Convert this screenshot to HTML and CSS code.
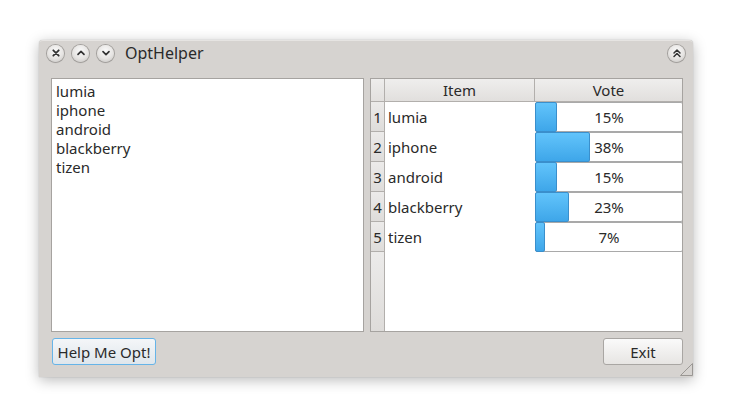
FILE: index.html
```html
<!DOCTYPE html>
<html>
<head>
<meta charset="utf-8">
<link rel="stylesheet" href="styles.css">
</head>
<body>
<div class="window">
  <div class="titlebar">
    <div class="tbtn"><svg width="16" height="16" viewBox="0 0 16 16"><path d="M5.3 5.3 L10.7 10.7 M10.7 5.3 L5.3 10.7" stroke="#333" stroke-width="1.8" stroke-linecap="round"/></svg></div>
    <div class="tbtn"><svg width="16" height="16" viewBox="0 0 16 16"><path d="M5 9.3 L8 6.3 L11 9.3" fill="none" stroke="#333" stroke-width="1.7" stroke-linecap="round" stroke-linejoin="round"/></svg></div>
    <div class="tbtn"><svg width="16" height="16" viewBox="0 0 16 16"><path d="M5 6.7 L8 9.7 L11 6.7" fill="none" stroke="#333" stroke-width="1.7" stroke-linecap="round" stroke-linejoin="round"/></svg></div>
    <div class="title">OptHelper</div>
    <div class="tbtn right"><svg width="16" height="16" viewBox="0 0 16 16"><path d="M5 8 L8 5 L11 8 M5 11.5 L8 8.5 L11 11.5" fill="none" stroke="#333" stroke-width="1.5" stroke-linecap="round" stroke-linejoin="round"/></svg></div>
  </div>
  <div class="content">
    <div class="panels">
      <div class="list">
        <div>lumia</div>
        <div>iphone</div>
        <div>android</div>
        <div>blackberry</div>
        <div>tizen</div>
      </div>
      <div class="table">
        <div class="row head">
          <div class="corner"></div>
          <div class="hcell item">Item</div>
          <div class="hcell vote">Vote</div>
        </div>
        <div class="body">
          <div class="row">
            <div class="rh">1</div><div class="cell item">lumia</div>
            <div class="cell vote"><div class="bar"><div class="chunk" style="width:15%"></div><span>15%</span></div></div>
          </div>
          <div class="row">
            <div class="rh">2</div><div class="cell item">iphone</div>
            <div class="cell vote"><div class="bar"><div class="chunk" style="width:38%"></div><span>38%</span></div></div>
          </div>
          <div class="row">
            <div class="rh">3</div><div class="cell item">android</div>
            <div class="cell vote"><div class="bar"><div class="chunk" style="width:15%"></div><span>15%</span></div></div>
          </div>
          <div class="row">
            <div class="rh">4</div><div class="cell item">blackberry</div>
            <div class="cell vote"><div class="bar"><div class="chunk" style="width:23%"></div><span>23%</span></div></div>
          </div>
          <div class="row">
            <div class="rh">5</div><div class="cell item">tizen</div>
            <div class="cell vote"><div class="bar"><div class="chunk" style="width:7%"></div><span>7%</span></div></div>
          </div>
          <div class="row filler">
            <div class="rh empty"></div><div class="cell item"></div><div class="cell vote"></div>
          </div>
        </div>
      </div>
    </div>
    <div class="buttons">
      <button class="btn help">Help Me Opt!</button>
      <button class="btn exit">Exit</button>
    </div>
  </div>
  <svg class="grip" width="13" height="13" viewBox="0 0 13 13"><path d="M12.5 0.5 L0.5 12.5 L12.5 12.5 Z" fill="none" stroke="#9a9794" stroke-width="1"/></svg>
</div>
</body>
</html>
```
FILE: styles.css
```css
html, body {
  margin: 0;
  padding: 0;
  background: #ffffff;
}
body {
  width: 734px;
  height: 416px;
  padding: 40px 0 0 39px;
  box-sizing: border-box;
  font-family: "Noto Sans", "DejaVu Sans", sans-serif;
  font-size: 15px;
  color: #2a2a2a;
}
.window {
  position: relative;
  width: 654px;
  height: 337px;
  background: #d6d3d0;
  border-radius: 4px 4px 0 0;
  box-shadow: 0 3px 14px rgba(0,0,0,0.28), 0 0 1px rgba(0,0,0,0.35);
  display: flex;
  flex-direction: column;
}
.titlebar {
  height: 24px;
  display: flex;
  align-items: center;
  padding: 0 8px 0 8px;
  gap: 8px;
  border-top: 1px solid #e6e4e2;
  border-radius: 4px 4px 0 0;
}
.tbtn {
  width: 17px;
  height: 17px;
  border-radius: 50%;
  background: radial-gradient(circle at 50% 35%, #fafafa 0%, #e6e4e2 55%, #c2c0be 100%);
  box-shadow: 0 0 0 1px #a3a09d, 0 1px 1px rgba(0,0,0,0.18);
  display: flex;
  align-items: center;
  justify-content: center;
}
.tbtn svg { display: block; }
.tbtn.right { margin-left: auto; }
.title {
  margin-left: 3px;
  font-size: 16px;
  color: #2a2a2a;
  padding-bottom: 1px;
}
.content {
  flex: 1;
  display: flex;
  flex-direction: column;
  padding: 13px 10px 12px 12px;
  gap: 6px;
}
.panels {
  height: 254px;
  display: flex;
  gap: 6px;
}
.list {
  width: 313px;
  box-sizing: border-box;
  background: #fff;
  border: 1px solid #a6a3a0;
  padding: 3px 4px;
  line-height: 19px;
}
.table {
  width: 313px;
  box-sizing: border-box;
  background: #fff;
  border: 1px solid #a6a3a0;
  display: flex;
  flex-direction: column;
  overflow: hidden;
}
.row {
  display: flex;
  height: 30px;
}
.row.head { height: 23px; }
.corner {
  width: 13px;
  border-right: 1px solid #b2afac;
  border-bottom: 1px solid #b2afac;
  background: linear-gradient(#eeedec, #e2e0de);
}
.hcell {
  display: flex;
  align-items: center;
  justify-content: center;
  background: linear-gradient(#efeeed, #e1dfdd);
  border-right: 1px solid #b2afac;
  border-bottom: 1px solid #b2afac;
  box-sizing: border-box;
}
.item { width: 150px; }
.vote { flex: 1; }
.hcell.vote { border-right: none; }
.body {
  flex: 1;
  display: flex;
  flex-direction: column;
}
.rh {
  width: 13px;
  border-right: 1px solid #b2afac;
  border-bottom: 1px solid #b2afac;
  background: linear-gradient(#ecebea, #dedcda);
  display: flex;
  align-items: center;
  justify-content: center;
}
.rh.empty { border-bottom: none; }
.row.filler { flex: 1; }
.cell {
  display: flex;
  align-items: center;
  box-sizing: border-box;
}
.cell.item { padding-left: 3px; }
.cell.vote { padding: 0; align-items: stretch; }
.bar {
  position: relative;
  flex: 1;
  border: 1px solid #a9a9a9;
  border-radius: 2px;
  background: #fff;
  display: flex;
  align-items: center;
  justify-content: center;
  margin-right: -1px;
}
.chunk {
  position: absolute;
  left: -1px;
  top: -1px;
  bottom: -1px;
  box-sizing: border-box;
  background: linear-gradient(#62c4fb, #3ea6e9);
  border: 1px solid #3a8fcc;
  border-radius: 2px;
}
.bar span { position: relative; }
.buttons {
  display: flex;
  justify-content: space-between;
  height: 27px;
}
.btn {
  font-family: inherit;
  font-size: 15px;
  color: #2a2a2a;
  height: 27px;
  border-radius: 3px;
  padding: 0 2px;
  margin: 0;
  white-space: nowrap;
}
.help {
  margin-left: 1px;
  width: 104px;
  border: 1px solid #66b4e8;
  background: linear-gradient(#f4f6f8, #dfe6ec);
}
.exit {
  width: 80px;
  border: 1px solid #a9a6a3;
  background: linear-gradient(#fafafa, #e7e5e3);
}
.grip {
  position: absolute;
  right: 0;
  bottom: 1px;
}
```
